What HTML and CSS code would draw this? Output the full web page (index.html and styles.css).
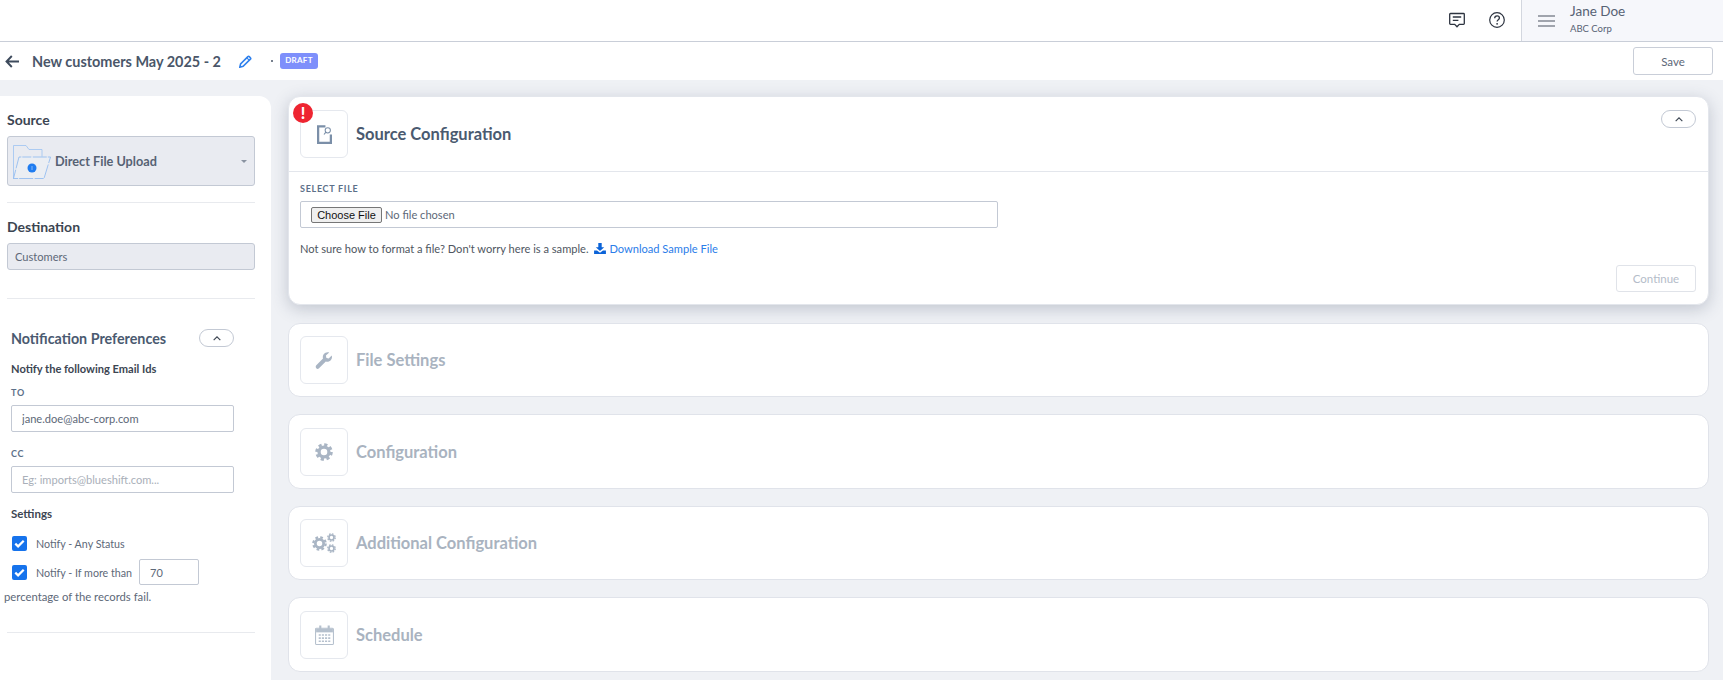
FILE: index.html
```html
<!DOCTYPE html>
<html lang="en">
<head>
<meta charset="utf-8">
<title>New customers May 2025 - 2</title>
<link rel="stylesheet" href="styles.css">
</head>
<body>
<svg class="defs" width="0" height="0" aria-hidden="true">
  <symbol id="gear" viewBox="0 0 24 24">
    <circle cx="12" cy="12" r="6.6" fill="none" stroke="currentColor" stroke-width="4.4"/>
    <circle cx="12" cy="12" r="9.9" fill="none" stroke="currentColor" stroke-width="3.6" stroke-dasharray="4.3 3.47"/>
  </symbol>
  <symbol id="chev" viewBox="0 0 12 8">
    <path d="M2 6l4-4 4 4" fill="none" stroke="currentColor" stroke-width="1.4"/>
  </symbol>
</svg>

<header class="topbar">
  <div class="top-icons">
    <svg viewBox="0 0 16 16" width="16" height="16"><path d="M1.500 1.500h13a.8.8 0 0 1 .8.8v9.200a.8.8 0 0 1-.8.8h-4.200L8 14.800 5.700 12.300H1.500a.8.8 0 0 1-.8-.8V2.300a.8.8 0 0 1 .8-.8z" fill="none" stroke="#2d3440" stroke-width="1.300"/><path d="M3.800 5h8.400M3.800 8.300h5.600" stroke="#2d3440" stroke-width="1.300"/></svg>
    <svg viewBox="0 0 16 16" width="16" height="16"><circle cx="8" cy="8" r="7.300" fill="none" stroke="#2d3440" stroke-width="1.200"/><path d="M5.700 6.200c0-1.400 1-2.300 2.400-2.300s2.300.9 2.300 2.100c0 1.800-2.300 1.700-2.300 3.600" fill="none" stroke="#2d3440" stroke-width="1.300"/><circle cx="8.100" cy="11.800" r=".9" fill="#2d3440"/></svg>
  </div>
  <div class="account">
    <svg class="ic-menu" viewBox="0 0 17 12" width="17" height="12"><path d="M0 1h17M0 6h17M0 11h17" stroke="#4a5361" stroke-width="1.200"/></svg>
    <div class="account-text">
      <div class="account-name">Jane Doe</div>
      <div class="account-org">ABC Corp</div>
    </div>
  </div>
</header>

<div class="subbar">
  <svg class="ic-back" viewBox="0 0 14 13" width="14" height="13"><path d="M14 6.500H1.500M6.800 1L1.500 6.500 6.800 12" fill="none" stroke="#3d4a5c" stroke-width="1.900"/></svg>
  <h1 class="page-title">New customers May 2025 - 2</h1>
  <svg class="ic-pencil" viewBox="0 0 13 13" width="13" height="13"><path d="M.8 12.200l.8-3.300L8.900 1.600a1 1 0 0 1 1.400 0l1.100 1.100a1 1 0 0 1 0 1.400L4.100 11.400z" fill="none" stroke="#2f80ed" stroke-width="1.600"/><path d="M7.800 2.800l2.400 2.400" stroke="#2f80ed" stroke-width="1.200"/></svg>
  <span class="dot"></span>
  <span class="badge">DRAFT</span>
  <button class="btn save">Save</button>
</div>

<main class="layout">
  <aside class="sidebar">
    <section class="side-block source">
      <h2 class="side-title">Source</h2>
      <div class="select">
        <svg class="ic-folder" viewBox="0 0 38 34" width="38" height="34"><path d="M.5 34V.5H13l3 4h13v7" fill="none" stroke="#9cc3f2" stroke-width=".8"/><path d="M.5 33.500L6 12h31.500L31 33.500z" fill="#eef1f6" fill-opacity=".5" stroke="#8ab8f0" stroke-width=".8" stroke-dasharray="9 1.500 14 1"/><circle cx="19" cy="23" r="4.500" fill="#1f7cf0"/><path d="M19 21v4" stroke="#8fc0fa" stroke-width=".9"/></svg>
        <span class="select-text">Direct File Upload</span>
        <span class="caret"></span>
      </div>
    </section>
    <section class="side-block dest">
      <h2 class="side-title">Destination</h2>
      <div class="readonly">Customers</div>
    </section>
    <section class="notify">
      <div class="notify-head">
        <h2 class="notify-title">Notification Preferences</h2>
        <button class="pill"><svg viewBox="0 0 12 8" width="10" height="7"><use href="#chev"/></svg></button>
      </div>
      <div class="strong-line">Notify the following Email Ids</div>
      <label class="field-label to">TO</label>
      <input class="text-input" type="text" value="jane.doe@abc-corp.com">
      <label class="field-label cc">CC</label>
      <input class="text-input" type="text" placeholder="Eg: imports@blueshift.com...">
      <div class="strong-line settings">Settings</div>
      <div class="check-row first">
        <span class="check"><svg viewBox="0 0 16 16" width="15" height="15"><path d="M3.500 8.200l3 2.800 6-6" fill="none" stroke="#fff" stroke-width="2.400"/></svg></span>
        <span>Notify - Any Status</span>
      </div>
      <div class="check-row second">
        <span class="check"><svg viewBox="0 0 16 16" width="15" height="15"><path d="M3.500 8.200l3 2.800 6-6" fill="none" stroke="#fff" stroke-width="2.400"/></svg></span>
        <span>Notify - If more than</span>
        <input class="pct-input" type="text" value="70">
      </div>
      <div class="pct-text">percentage of the records fail.</div>
    </section>
  </aside>

  <div class="cards">
    <section class="card active">
      <div class="card-head">
        <div class="icon-box">
          <span class="alert">!</span>
          <svg viewBox="0 0 16 20" width="15" height="19"><path d="M9 1.200H1.200v17.600h13.600V10" fill="none" stroke="#7b8fa8" stroke-width="2.400"/><circle cx="11.500" cy="5.500" r="2.800" fill="none" stroke="#7b8fa8" stroke-width="1.100"/><path d="M9.500 7.500L7.500 10" stroke="#7b8fa8" stroke-width="1.200"/></svg>
        </div>
        <h3 class="card-title">Source Configuration</h3>
        <button class="pill card-pill"><svg viewBox="0 0 12 8" width="10" height="7"><use href="#chev"/></svg></button>
      </div>
      <div class="card-body">
        <label class="field-label select-file">SELECT FILE</label>
        <div class="file-box"><input class="file" type="file"></div>
        <p class="hint">Not sure how to format a file? Don't worry here is a sample.
          <a class="dl" href="#"><svg viewBox="0 0 14 13" width="12" height="11"><path d="M5 0h4v5h3L7 9.500 2 5h3z" fill="#0b63d8"/><path d="M0 9h3.500L7 11.500 10.500 9H14v4H0z" fill="#0b63d8"/></svg>Download Sample File</a>
        </p>
        <div class="actions"><button class="btn continue">Continue</button></div>
      </div>
    </section>

    <section class="card muted">
      <div class="card-head">
        <div class="icon-box">
          <svg viewBox="0 0 18 18" width="18" height="18"><path d="M1.300 14.300L8 7.600C7.300 5 8.400 2.700 10.500 1.700c1.200-.6 2.600-.7 3.700-.2L10.900 4.600l.5 2.300 2.300.5 3-3c.6 1.700.2 3.600-1 4.900-1.300 1.400-3.200 1.800-4.900 1.200L4 17.300c-.8.800-2 .8-2.700 0-.8-.8-.8-2.200 0-3z" fill="#a9b5c4"/></svg>
        </div>
        <h3 class="card-title">File Settings</h3>
      </div>
    </section>
    <section class="card muted">
      <div class="card-head">
        <div class="icon-box">
          <svg class="gear" width="18" height="18"><use href="#gear"/></svg>
        </div>
        <h3 class="card-title">Configuration</h3>
      </div>
    </section>
    <section class="card muted">
      <div class="card-head">
        <div class="icon-box">
          <span class="gears">
            <svg class="gear" width="15" height="15"><use href="#gear"/></svg>
            <span class="small-gears">
              <svg class="gear" width="9" height="9"><use href="#gear"/></svg>
              <svg class="gear" width="9" height="9"><use href="#gear"/></svg>
            </span>
          </span>
        </div>
        <h3 class="card-title">Additional Configuration</h3>
      </div>
    </section>
    <section class="card muted">
      <div class="card-head">
        <div class="icon-box">
          <svg viewBox="0 0 18 19" width="19" height="20"><path d="M1.500 3h15a1 1 0 0 1 1 1v13.500a1 1 0 0 1-1 1h-15a1 1 0 0 1-1-1V4a1 1 0 0 1 1-1z" fill="none" stroke="#b5c0cd" stroke-width="1"/><path d="M1 3.500h16V7H1z" fill="#b5c0cd"/><path d="M4 .5h2v4H4zM12 .5h2v4h-2z" fill="#b5c0cd"/><path d="M3.500 9.500h11M3.500 12.500h11M3.500 15.500h11" stroke="#b5c0cd" stroke-width="1.500" stroke-dasharray="2 1"/></svg>
        </div>
        <h3 class="card-title">Schedule</h3>
      </div>
    </section>
  </div>
</main>
</body>
</html>
```

FILE: styles.css
```css
* { box-sizing: border-box; }
html, body { margin: 0; height: 100%; }
body {
  width: 1723px;
  height: 680px;
  overflow: hidden;
  background: #eff1f5;
  font-family: "Lato", "Liberation Sans", sans-serif;
  color: #4f5b6b;
  font-size: 11px;
}
.defs { display: block; height: 0; }
h1, h2, h3, p { margin: 0; }
button { font-family: inherit; cursor: pointer; }

.topbar {
  height: 42px;
  background: #fff;
  border-bottom: 1px solid #c9ced8;
  display: flex;
  justify-content: flex-end;
  align-items: stretch;
}
.top-icons { display: flex; align-items: center; gap: 24px; padding: 0 16px 2px 0; }
.account {
  width: 202px;
  background: #f6f7fb;
  border-left: 1px solid #d3d7df;
  display: flex;
  align-items: center;
  gap: 15px;
  padding-left: 16px;
}
.account-name { font-size: 13.500px; line-height: 18px; color: #566274; }
.account-org { font-size: 9.500px; line-height: 14px; margin-top: 2px; color: #566274; }
.account-text { margin-top: -3px; }

.subbar {
  height: 38px;
  background: #fff;
  display: flex;
  align-items: center;
  padding: 0 10px 0 5px;
}
.page-title { font-size: 14.450px; font-weight: 700; color: #4a5669; margin-left: 13px; }
.ic-pencil { margin-left: 18px; }
.dot { width: 2px; height: 2px; border-radius: 50%; background: #4a5669; margin-left: 19px; }
.badge {
  margin-left: 7px;
  height: 16px;
  width: 38px;
  border-radius: 3px;
  background: #7e8ffb;
  color: #fff;
  font-size: 8px;
  font-weight: 700;
  letter-spacing: .3px;
  text-align: center;
  line-height: 15px;
}
.btn {
  width: 80px;
  height: 28px;
  background: #fff;
  border: 1px solid #c9ced8;
  border-radius: 3px;
  font-size: 11.500px;
  color: #5d6878;
}
.save { margin-left: auto; }

.layout {
  display: flex;
  align-items: flex-start;
  padding-top: 16px;
  height: 600px;
}
.sidebar {
  width: 271px;
  height: 584px;
  background: #fff;
  border-radius: 0 12px 0 0;
  padding: 0 16px 0 7px;
  flex: none;
}
.side-title { font-size: 14px; font-weight: 700; color: #3c4552; line-height: 18px; }
.side-block { border-bottom: 1px solid #e8eaee; }
.source { padding-top: 15px; height: 107px; }
.source .side-title { margin-bottom: 7px; }
.dest { padding-top: 15px; height: 96px; }
.dest .side-title { margin-bottom: 7px; }
.select {
  height: 50px;
  background: #e9ebf1;
  border: 1px solid #c3c9d4;
  border-radius: 3px;
  display: flex;
  align-items: center;
  padding-left: 5px;
}
.ic-folder { margin-top: 1px; flex: none; }
.select-text { margin-left: 4px; font-size: 12.700px; font-weight: 700; color: #566274; }
.caret {
  margin-left: auto;
  margin-right: 7px;
  border: 3px solid transparent;
  border-top: 3px solid #8a93a1;
  border-bottom: 0;
}
.readonly {
  height: 27px;
  background: #e9ebf1;
  border: 1px solid #c3c9d4;
  border-radius: 3px;
  line-height: 25px;
  padding-left: 7px;
  font-size: 11.100px;
  color: #5d6878;
}
.notify { padding: 29px 0 0 4px; height: 334px; border-bottom: 1px solid #e8eaee; }
.notify-head { display: flex; align-items: center; justify-content: space-between; width: 223px; height: 20px; }
.notify-title { font-size: 14.300px; font-weight: 700; color: #4a5a70; }
.pill {
  width: 35px;
  height: 18px;
  padding: 0;
  background: #fff;
  border: 1px solid #c3c9d4;
  border-radius: 9px;
  display: flex;
  align-items: center;
  justify-content: center;
  color: #3c4552;
}
.strong-line { font-size: 11.100px; font-weight: 700; color: #3c4552; line-height: 16px; }
.notify .strong-line { margin-top: 13px; }
.field-label {
  display: block;
  font-size: 9px;
  font-weight: 700;
  letter-spacing: .7px;
  color: #5c7089;
  line-height: 12px;
}
.to { margin-top: 10px; margin-bottom: 6px; }
.cc { margin-top: 16px; margin-bottom: 6px; }
.text-input {
  display: block;
  width: 223px;
  height: 27px;
  padding: 0 10px;
  border: 1px solid #c3c9d4;
  border-radius: 2px;
  background: #fff;
  font: 11.100px "Lato", sans-serif;
  color: #5d6878;
  outline: none;
}
.text-input::placeholder { color: #a9afb9; }
.notify .settings { margin-top: 13px; font-size: 11.500px; }
.check-row { display: flex; align-items: center; font-size: 10.700px; color: #5d6878; }
.check-row .check { margin-left: 1px; margin-right: 9px; }
.check {
  width: 15px;
  height: 15px;
  border-radius: 2px;
  background: #1673ec;
  display: block;
  flex: none;
}
.check svg { display: block; }
.first { margin-top: 14px; height: 15px; }
.second { margin-top: 8px; height: 26px; }
.pct-input {
  margin-left: 7px;
  width: 60px;
  height: 26px;
  padding: 0 10px;
  border: 1px solid #c3c9d4;
  border-radius: 2px;
  font: 11px "Lato", sans-serif;
  color: #5d6878;
}
.pct-text { margin: 4px 0 0 -7px; font-size: 11.300px; color: #5d6878; line-height: 16px; }

.cards {
  flex: none;
  width: 1421px;
  margin-left: 17px;
  display: flex;
  flex-direction: column;
  gap: 17px;
}
.card {
  background: #fff;
  border: 1px solid #e0e3ea;
  border-radius: 12px;
  height: 74.500px;
}
.card.active {
  height: 209px;
  border: 1px solid #e3e6ec;
  box-shadow: 0 4px 16px rgba(60, 72, 100, .25);
  margin-bottom: .5px;
}
.card-head {
  height: 100%;
  display: flex;
  align-items: center;
  padding-left: 11px;
  position: relative;
}
.muted .card-head { padding-top: 1px; }
.active .card-head { height: 75px; border-bottom: 1px solid #e3e6ec; }
.icon-box {
  width: 48px;
  height: 48px;
  border: 1px solid #e5e8ee;
  border-radius: 6px;
  display: flex;
  align-items: center;
  justify-content: center;
  position: relative;
  color: #a9b5c4;
  flex: none;
}
.alert {
  position: absolute;
  left: -8px;
  top: -8px;
  width: 20px;
  height: 20px;
  border-radius: 50%;
  background: #ee2531;
  color: #fff;
  font-weight: 900;
  font-size: 16px;
  line-height: 20px;
  text-align: center;
}
.card-title { margin-left: 8px; font-size: 16.500px; font-weight: 700; color: #4a5a70; }
.muted .card-title { color: #a9b3c0; }
.card-pill { position: absolute; right: 12px; top: 13px; }
.card-body { padding: 11px 12px 0 11px; }
.select-file { margin-bottom: 6px; }
.file-box {
  width: 698px;
  height: 27px;
  border: 1px solid #c3c9d4;
  border-radius: 2px;
  display: flex;
  align-items: center;
  padding: 1px 0 0 10px;
}
.file { font: 11.100px "Lato", sans-serif; color: #5d6878; }
.file::file-selector-button {
  font: 11px "Liberation Sans", sans-serif;
  color: #111;
  width: 71px;
  height: 16px;
  line-height: 14px;
  padding: 0;
  margin-right: 3px;
  background: #efefef;
  border: 1px solid #767676;
  border-radius: 2px;
}
.hint { margin-top: 13px; font-size: 11.100px; color: #4f5661; line-height: 16px; }
.dl { color: #2b7de9; text-decoration: none; margin-left: 3px; }
.dl svg { margin-right: 3px; vertical-align: -1px; }
.actions { display: flex; justify-content: flex-end; margin-top: 8px; }
.continue { width: 80px; height: 27px; border-color: #e0e3e9; color: #b4bcc9; }

.gear { display: block; color: #a9b5c4; }
.gears { display: flex; align-items: center; gap: 0; }
.small-gears { display: flex; flex-direction: column; gap: 2px; }
```
